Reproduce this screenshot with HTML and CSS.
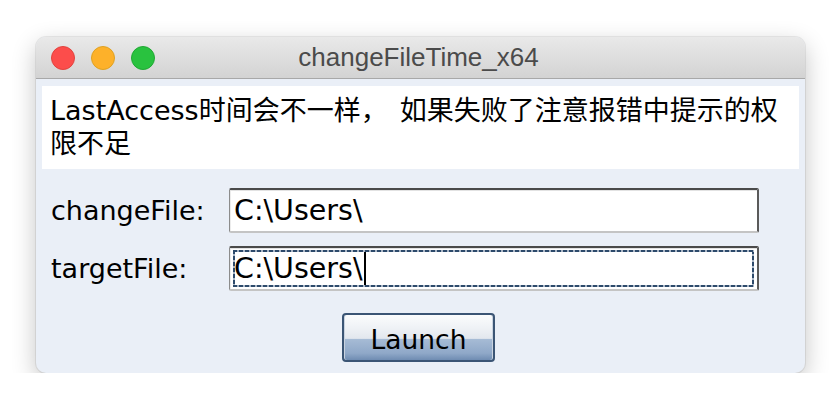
FILE: index.html
```html
<!DOCTYPE html>
<html>
<head>
<meta charset="utf-8">
<link rel="stylesheet" href="styles.css">
</head>
<body>
<div class="window">
  <div class="titlebar">
    <div class="lights">
      <span class="light red"></span>
      <span class="light yellow"></span>
      <span class="light green"></span>
    </div>
    <div class="title">changeFileTime_x64</div>
    <div></div>
  </div>
  <div class="content">
    <div class="notice">LastAccess时间会不一样<span class="punct">，</span>如果失败了注意报错中提示的权<br>限不足</div>
    <div class="form">
      <label class="label">changeFile:</label>
      <div class="field"><span class="value">C:\Users\</span></div>
      <label class="label">targetFile:</label>
      <div class="field focused"><span class="value">C:\Users\</span><span class="caret"></span></div>
    </div>
    <div class="actions">
      <button class="btn">Launch</button>
    </div>
  </div>
</div>
</body>
</html>
```
FILE: styles.css
```css
html, body {
  margin: 0;
  padding: 0;
  background: #ffffff;
}
body {
  padding: 37px 0 0 36px;
  font-family: "DejaVu Sans", "Noto Sans CJK SC", sans-serif;
}
.window {
  width: 769px;
  height: 336px;
  border-radius: 10px;
  overflow: hidden;
  background: #eaeff7;
  box-shadow: 0 8px 24px rgba(0,0,0,0.24), 0 0 0 1px rgba(0,0,0,0.07);
  display: flex;
  flex-direction: column;
}
.titlebar {
  height: 41px;
  flex: none;
  display: grid;
  grid-template-columns: 1fr auto 1fr;
  align-items: center;
  background: linear-gradient(#e9e9e9, #d3d3d3);
  border-bottom: 1px solid #a8a8a8;
}
.lights {
  display: flex;
  gap: 16px;
  padding-left: 15px;
}
.light {
  width: 24px;
  height: 24px;
  border-radius: 50%;
  box-sizing: border-box;
}
.red { background: #fc4d4b; border: 1px solid #e0443e; }
.yellow { background: #fdb12a; border: 1px solid #dea123; }
.green { background: #29c23f; border: 1px solid #21a834; }
.title {
  font-family: "Liberation Sans", "Noto Sans", sans-serif;
  font-size: 26px;
  color: #4b4b4b;
  padding-right: 4px;
}
.content {
  padding: 7px 6px 0 6px;
  display: flex;
  flex-direction: column;
}
.notice {
  background: #ffffff;
  height: 83px;
  box-sizing: border-box;
  padding: 8px 8px 0 8px;
  font-size: 27px;
  line-height: 33px;
  color: #000;
}
.punct {
  margin-right: 12px;
}
.form {
  margin-top: 19px;
  padding-left: 9px;
  display: grid;
  grid-template-columns: 178px 530px;
  grid-auto-rows: 45px;
  row-gap: 13px;
  align-items: center;
}
.label {
  font-size: 27px;
  color: #000;
}
.field {
  position: relative;
  height: 45px;
  box-sizing: border-box;
  background: #fff;
  border: 1px solid #8c8c8c;
  border-right: 2px solid #5a5a5a;
  border-top: 2px solid #4a4a4a;
  border-bottom: 2px solid #c4c4c4;
  border-radius: 2px;
  box-shadow: inset 0 1px 0 #e2e2e2, inset 1px 0 0 #ececec;
  display: flex;
  align-items: center;
  padding-left: 4px;
  font-size: 28.5px;
  color: #000;
}
.field.focused::after {
  content: "";
  position: absolute;
  left: 3px;
  right: 3px;
  top: 2px;
  bottom: 2px;
  background:
    repeating-linear-gradient(90deg, #2d4a6b 0 4px, #aab6c6 4px 6px) top / 100% 2px no-repeat,
    repeating-linear-gradient(90deg, #2d4a6b 0 4px, #aab6c6 4px 6px) bottom / 100% 2px no-repeat,
    repeating-linear-gradient(180deg, #2d4a6b 0 4px, #aab6c6 4px 6px) left / 2px 100% no-repeat,
    repeating-linear-gradient(180deg, #2d4a6b 0 4px, #aab6c6 4px 6px) right / 2px 100% no-repeat;
  pointer-events: none;
}
.caret {
  display: inline-block;
  width: 2px;
  height: 34px;
  background: #000;
  margin-left: 1px;
}
.actions {
  margin-top: 22px;
  display: flex;
  justify-content: center;
  padding-right: 4px;
}
.btn {
  width: 153px;
  height: 49px;
  border: 2px solid #3b5575;
  border-radius: 4px;
  background: linear-gradient(#fbfcfd 0%, #eef1f5 30%, #e2e7ee 52%, #a6bbd5 54%, #8fa8c8 85%, #6f8cb2 100%);
  box-shadow: inset 1px 0 0 #c9d3e0, inset -1px 0 0 #c9d3e0;
  font-family: "DejaVu Sans", sans-serif;
  font-size: 26.5px;
  color: #000;
  padding: 4px 0 0 0;
}
```
